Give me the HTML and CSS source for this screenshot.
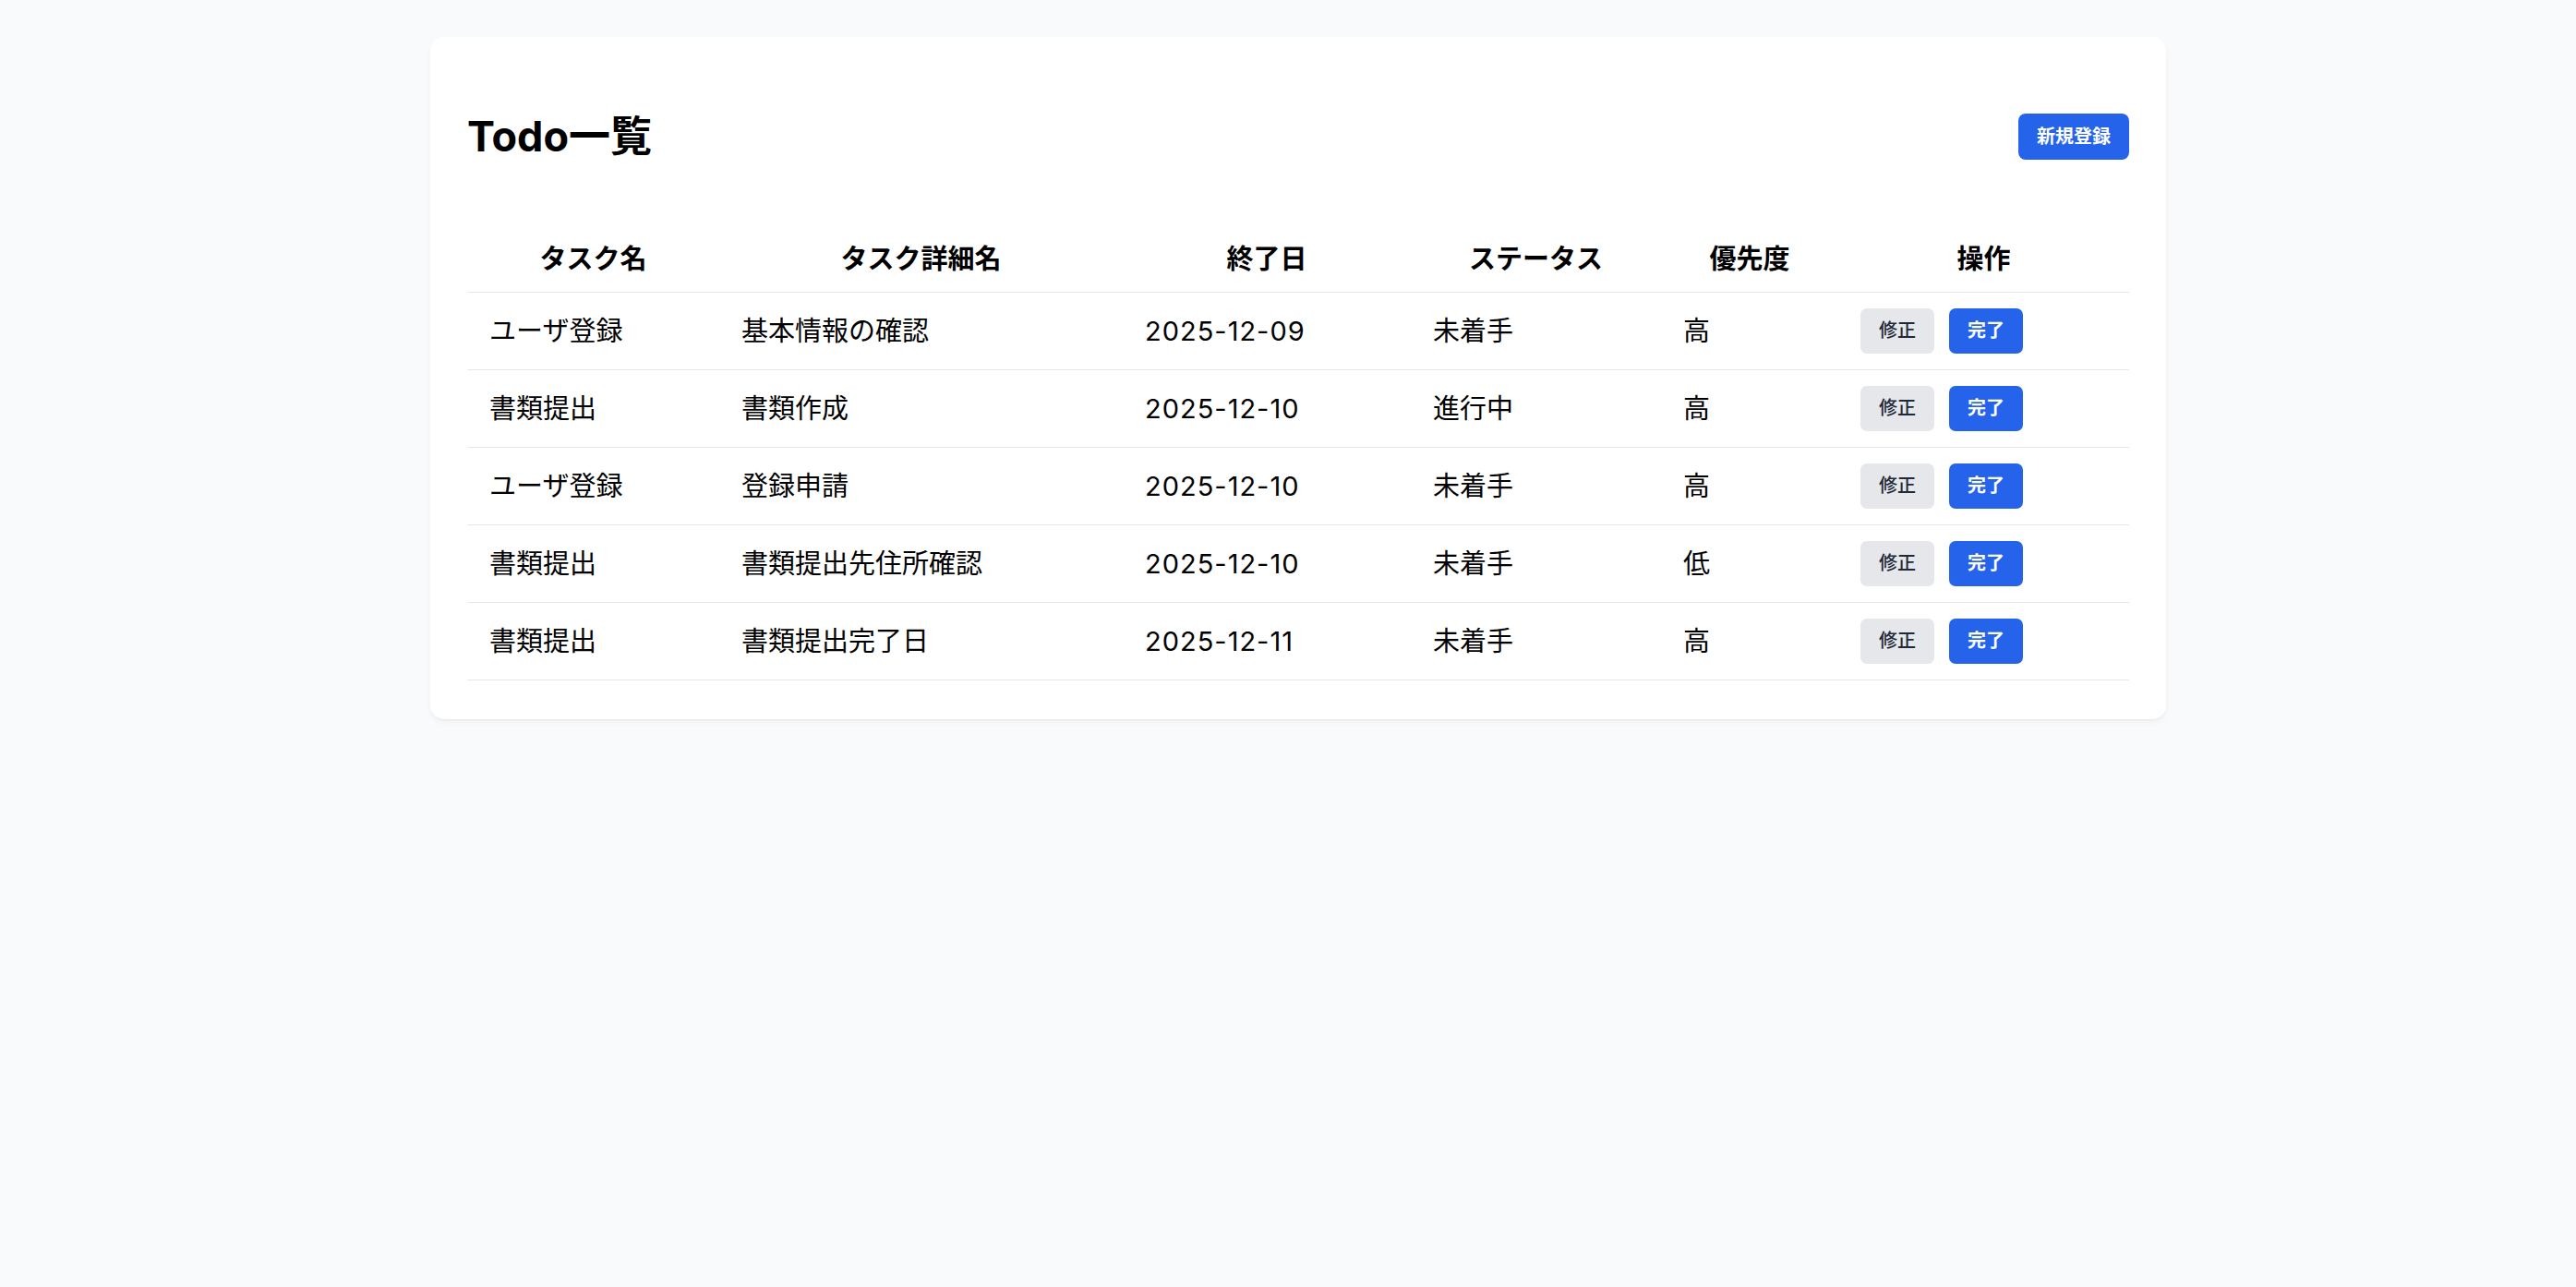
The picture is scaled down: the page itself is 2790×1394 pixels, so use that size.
FILE: index.html
```html
<!DOCTYPE html>
<html lang="ja">
<head>
    <meta charset="UTF-8">
    <title>Todo一覧</title>
    <link rel="stylesheet" href="styles.css">
</head>
<body>
    <div class="page">
        <div class="card">
            <!-- Header -->
            <div class="card-header">
                <h1 class="title">Todo一覧</h1>
                <button class="btn btn-primary btn-new">新規登録</button>
            </div>

            <!-- Todo table -->
            <table class="todo-table">
                <thead>
                    <tr>
                        <th class="col-name">タスク名</th>
                        <th class="col-detail">タスク詳細名</th>
                        <th class="col-date">終了日</th>
                        <th class="col-status">ステータス</th>
                        <th class="col-priority">優先度</th>
                        <th class="col-actions">操作</th>
                    </tr>
                </thead>
                <tbody>
                    <tr>
                        <td>ユーザ登録</td>
                        <td>基本情報の確認</td>
                        <td class="date">2025-12-09</td>
                        <td>未着手</td>
                        <td>高</td>
                        <td><div class="actions"><button class="btn btn-gray">修正</button><button class="btn btn-primary">完了</button></div></td>
                    </tr>
                    <tr>
                        <td>書類提出</td>
                        <td>書類作成</td>
                        <td class="date">2025-12-10</td>
                        <td>進行中</td>
                        <td>高</td>
                        <td><div class="actions"><button class="btn btn-gray">修正</button><button class="btn btn-primary">完了</button></div></td>
                    </tr>
                    <tr>
                        <td>ユーザ登録</td>
                        <td>登録申請</td>
                        <td class="date">2025-12-10</td>
                        <td>未着手</td>
                        <td>高</td>
                        <td><div class="actions"><button class="btn btn-gray">修正</button><button class="btn btn-primary">完了</button></div></td>
                    </tr>
                    <tr>
                        <td>書類提出</td>
                        <td>書類提出先住所確認</td>
                        <td class="date">2025-12-10</td>
                        <td>未着手</td>
                        <td>低</td>
                        <td><div class="actions"><button class="btn btn-gray">修正</button><button class="btn btn-primary">完了</button></div></td>
                    </tr>
                    <tr>
                        <td>書類提出</td>
                        <td>書類提出完了日</td>
                        <td class="date">2025-12-11</td>
                        <td>未着手</td>
                        <td>高</td>
                        <td><div class="actions"><button class="btn btn-gray">修正</button><button class="btn btn-primary">完了</button></div></td>
                    </tr>
                </tbody>
            </table>
        </div>
    </div>
</body>
</html>
```

FILE: styles.css
```css
body {
    margin: 0;
    background-color: #f9fafb;
    font-family: Inter, "Noto Sans CJK JP", sans-serif;
    color: #000;
}

.page {
    padding: 40px 0 40px 22px;
}

.card {
    max-width: 1880px;
    margin: 0 auto;
    box-sizing: border-box;
    padding: 40px 40px 42px;
    background-color: #fff;
    border-radius: 15px;
    box-shadow: 0 4px 8px -2px rgba(0, 0, 0, 0.06), 0 2px 4px -2px rgba(0, 0, 0, 0.05);
}

.card-header {
    display: flex;
    align-items: center;
    justify-content: space-between;
    padding-top: 40px;
    margin-bottom: 68px;
}

.title {
    margin: 0;
    font-size: 45px;
    line-height: 56px;
    font-weight: 700;
}

.btn {
    border: none;
    border-radius: 7px;
    padding: 10px 20px;
    font-family: Inter, "Noto Sans CJK JP", sans-serif;
    font-size: 20px;
    line-height: 29px;
    white-space: nowrap;
    cursor: pointer;
}

.btn-primary {
    background-color: #2563eb;
    color: #fff;
    font-weight: 600;
}

.btn-new {
    line-height: 30px;
    border-radius: 8px;
}

.btn-gray {
    background-color: #e5e7eb;
    color: #1f2937;
    font-weight: 500;
}

.todo-table {
    width: 100%;
    border-collapse: collapse;
    table-layout: fixed;
    font-size: 29px;
}

.todo-table th,
.todo-table td {
    box-sizing: border-box;
    border-bottom: 1px solid #e5e7eb;
}

.todo-table th {
    padding: 16px 24px 14px;
    line-height: 42px;
    font-weight: 700;
    text-align: center;
}

.todo-table td {
    padding: 17px 24px;
    line-height: 42px;
    text-align: left;
    vertical-align: middle;
}

.todo-table td.date {
    letter-spacing: 1px;
}

.col-name { width: 273px; }
.col-detail { width: 437px; }
.col-date { width: 312px; }
.col-status { width: 271px; }
.col-priority { width: 192px; }

.actions {
    display: flex;
    gap: 16px;
}
```
